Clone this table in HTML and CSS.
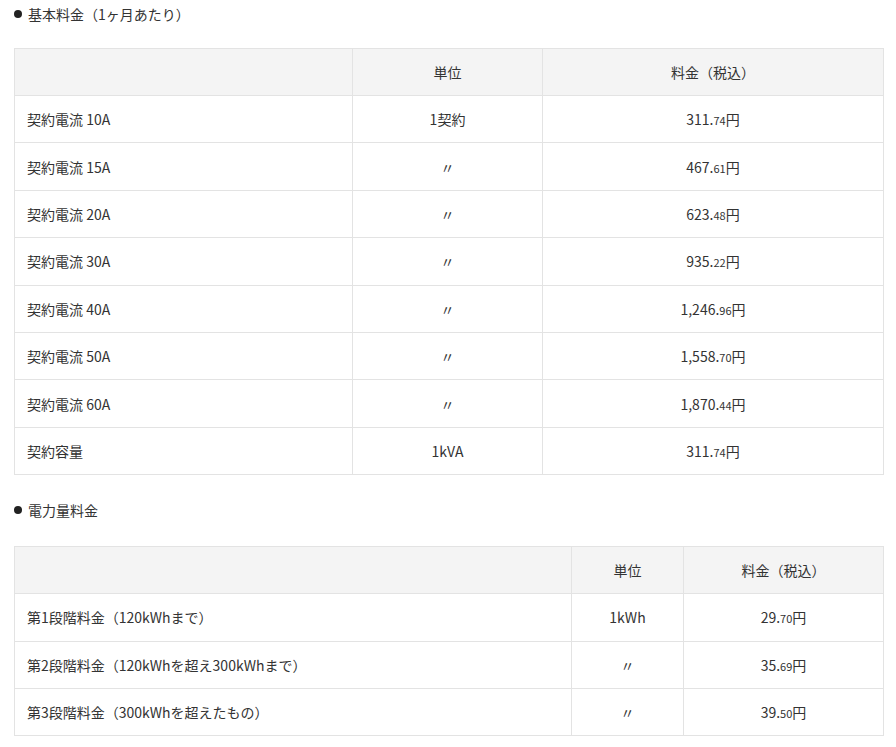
FILE: index.html
```html
<!DOCTYPE html>
<html lang="ja">
<head>
<meta charset="utf-8">
<link rel="stylesheet" href="styles.css">
</head>
<body>
<section class="block">
  <h3 class="heading">基本料金（1ヶ月あたり）</h3>
  <table class="rate t1">
    <colgroup><col class="c1a"><col class="c1b"><col class="c1c"></colgroup>
    <thead><tr><th></th><th>単位</th><th>料金（税込）</th></tr></thead>
    <tbody>
      <tr><td>契約電流 10A</td><td class="ct">1契約</td><td class="ct">311.<small>74</small>円</td></tr>
      <tr><td>契約電流 15A</td><td class="ct">〃</td><td class="ct">467.<small>61</small>円</td></tr>
      <tr><td>契約電流 20A</td><td class="ct">〃</td><td class="ct">623.<small>48</small>円</td></tr>
      <tr><td>契約電流 30A</td><td class="ct">〃</td><td class="ct">935.<small>22</small>円</td></tr>
      <tr><td>契約電流 40A</td><td class="ct">〃</td><td class="ct">1,246.<small>96</small>円</td></tr>
      <tr><td>契約電流 50A</td><td class="ct">〃</td><td class="ct">1,558.<small>70</small>円</td></tr>
      <tr><td>契約電流 60A</td><td class="ct">〃</td><td class="ct">1,870.<small>44</small>円</td></tr>
      <tr><td>契約容量</td><td class="ct">1kVA</td><td class="ct">311.<small>74</small>円</td></tr>
    </tbody>
  </table>
</section>
<section class="block second">
  <h3 class="heading">電力量料金</h3>
  <table class="rate t2">
    <colgroup><col class="c2a"><col class="c2b"><col class="c2c"></colgroup>
    <thead><tr><th></th><th>単位</th><th>料金（税込）</th></tr></thead>
    <tbody>
      <tr><td>第1段階料金（120kWhまで）</td><td class="ct">1kWh</td><td class="ct">29.<small>70</small>円</td></tr>
      <tr><td>第2段階料金（120kWhを超え300kWhまで）</td><td class="ct">〃</td><td class="ct">35.<small>69</small>円</td></tr>
      <tr><td>第3段階料金（300kWhを超えたもの）</td><td class="ct">〃</td><td class="ct">39.<small>50</small>円</td></tr>
    </tbody>
  </table>
</section>
</body>
</html>
```

FILE: styles.css
```css
html, body {
  margin: 0;
  padding: 0;
  background: #fff;
}
body {
  padding: 0 13px 0 14px;
  font-family: "Noto Sans CJK JP", "Noto Sans", sans-serif;
  font-size: 14px;
  color: #333;
}
.heading {
  margin: 2px 0 22px;
  font-size: 14px;
  font-weight: normal;
  line-height: 24px;
  display: flex;
  align-items: center;
  gap: 6px;
}
.heading::before {
  content: "";
  width: 8px;
  height: 8px;
  border-radius: 50%;
  background: #222;
  flex: none;
}
.second .heading {
  margin-top: 23px;
  margin-bottom: 24px;
}
.rate {
  width: 100%;
  border-collapse: collapse;
  table-layout: fixed;
}
.rate th, .rate td {
  border: 1px solid #e3e3e3;
  padding: 0 12px;
  height: 47.42px;
  line-height: 22px;
  text-align: left;
  font-weight: normal;
  box-sizing: border-box;
}
.rate th {
  background: #f4f4f4;
  text-align: center;
  height: 47px;
}
.rate td.ct {
  text-align: center;
}
.rate small {
  font-size: 11px;
  line-height: 0;
}
.c1a { width: 338px; }
.c1b { width: 190px; }
.c1c { width: 341px; }
.c2a { width: 557px; }
.c2b { width: 112px; }
.c2c { width: 200px; }
```
